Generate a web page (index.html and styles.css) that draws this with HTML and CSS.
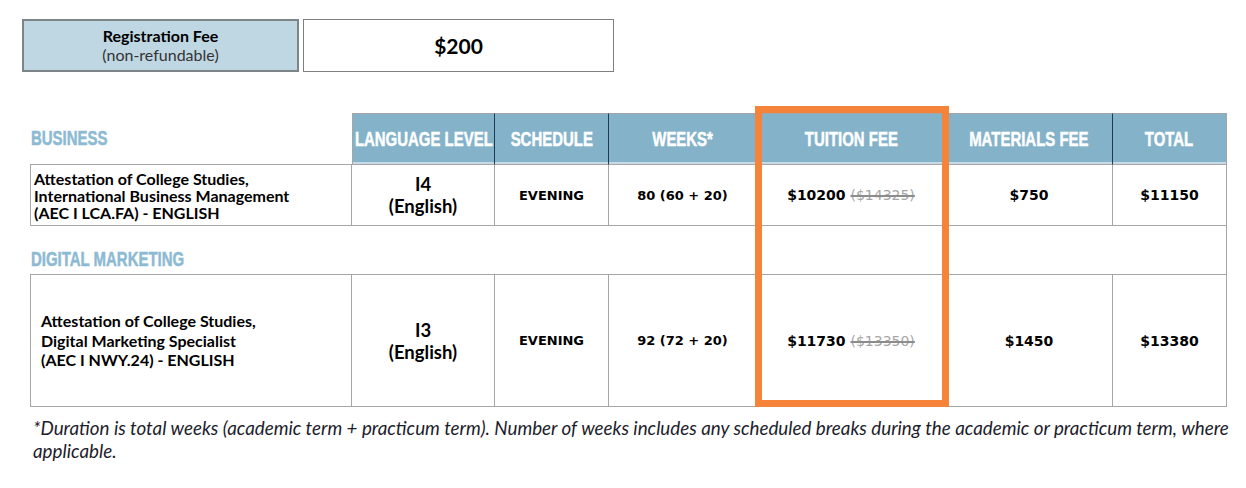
FILE: index.html
```html
<!DOCTYPE html>
<html lang="en">
<head>
<meta charset="utf-8">
<title>Fees</title>
<link rel="stylesheet" href="styles.css">
</head>
<body>
<div class="page">
  <div class="reg">
    <div class="reg-label"><strong>Registration Fee</strong><span>(non-refundable)</span></div>
    <div class="reg-value">$200</div>
  </div>
  <div class="table-wrap">
    <table class="fees">
      <colgroup>
        <col class="c1"><col class="c2"><col class="c3"><col class="c4"><col class="c5"><col class="c6"><col class="c7">
      </colgroup>
      <thead>
        <tr>
          <th class="cat"><span class="cx">BUSINESS</span></th>
          <th class="h h-first"><span class="hx">LANGUAGE LEVEL</span></th>
          <th class="h"><span class="hx">SCHEDULE</span></th>
          <th class="h"><span class="hx">WEEKS*</span></th>
          <th class="h"><span class="hx">TUITION FEE</span></th>
          <th class="h"><span class="hx">MATERIALS FEE</span></th>
          <th class="h h-last"><span class="hx">TOTAL</span></th>
        </tr>
      </thead>
      <tbody>
        <tr class="r1">
          <td class="prog prog-tight">Attestation of College Studies,<br>International Business Management<br>(AEC I LCA.FA) - ENGLISH</td>
          <td class="lvl">I4<br>(English)</td>
          <td class="val">EVENING</td>
          <td class="val">80 (60 + 20)</td>
          <td class="val price">$10200 <s>($14325)</s></td>
          <td class="val price">$750</td>
          <td class="val price">$11150</td>
        </tr>
        <tr class="r-cat">
          <td class="cat" colspan="7"><span class="cx">DIGITAL MARKETING</span></td>
        </tr>
        <tr class="r2">
          <td class="prog prog-loose">Attestation of College Studies,<br>Digital Marketing Specialist<br>(AEC I NWY.24) - ENGLISH</td>
          <td class="lvl">I3<br>(English)</td>
          <td class="val">EVENING</td>
          <td class="val">92 (72 + 20)</td>
          <td class="val price">$11730 <s>($13350)</s></td>
          <td class="val price">$1450</td>
          <td class="val price">$13380</td>
        </tr>
      </tbody>
    </table>
    <div class="highlight"></div>
  </div>
  <p class="note">*Duration is total weeks (academic term + practicum term). Number of weeks includes any scheduled breaks during the academic or practicum term, where applicable.</p>
</div>
</body>
</html>
```
FILE: styles.css
```css
* { box-sizing: border-box; }
html, body { margin: 0; padding: 0; background: #fff; }
body { font-family: Lato, "Open Sans", sans-serif; color: #000; }

.page { padding-top: 19px; width: 1246px; }

.reg { display: flex; gap: 4px; margin-left: 22px; }
.reg-label {
  width: 277px; height: 53px;
  background: #bfd7e3;
  border: 2px solid #7d8488;
  display: flex; flex-direction: column; align-items: center; justify-content: center;
  font-size: 16px; line-height: 19px;
  padding-bottom: 1px;
}
.reg-label strong { font-weight: 700; }
.reg-label span { font-weight: 400; color: #333; }
.reg-value {
  width: 311px; height: 53px;
  border: 1px solid #7f7f7f;
  display: flex; align-items: center; justify-content: center;
  font-size: 21px; font-weight: 700;
}

.table-wrap { position: relative; margin-left: 30px; margin-top: 41px; width: 1197px; }

.fees { border-collapse: separate; border-spacing: 0; table-layout: fixed; width: 1197px; }
.c1 { width: 322px; } .c2 { width: 143px; } .c3 { width: 114px; } .c4 { width: 148px; }
.c5 { width: 189px; } .c6 { width: 167px; } .c7 { width: 114px; }

.fees th, .fees td { padding: 0; vertical-align: middle; text-align: center; }

.hx, .cx {
  display: inline-block;
  white-space: nowrap;
  font-family: "Liberation Sans", Arial, sans-serif;
  font-weight: 700;
  font-size: 21px;
  line-height: 24px;
  transform: scaleX(0.712);
  -webkit-text-stroke: 0.5px currentColor;
}
.hx { margin: 0 -60px; transform-origin: 50% 50%; }
.cx { transform-origin: 0 50%; }

.fees thead th { height: 52px; }
.fees th.h {
  background: #83b2c9;
  color: #fff;
  border-top: 1px solid #a6a6a6;
  border-right: 1px solid #1c3a52;
  border-bottom: 1px solid #a6a6a6;
  box-shadow: inset 0 -2px 0 #c6dbe6;
}
.fees th.h-first { border-left: 1px solid #a6a6a6; }
.fees th.h-last { border-right: 1px solid #a6a6a6; }

.fees .cat {
  text-align: left;
  color: #8cbad3;
  padding-left: 1px;
  border-bottom: 1px solid #a6a6a6;
}
.fees thead th.cat { padding-bottom: 2px; }

.fees tbody td {
  border-right: 1px solid #a6a6a6;
  border-bottom: 1px solid #a6a6a6;
  font-weight: 700;
}
.fees tbody td.prog { border-left: 1px solid #a6a6a6; text-align: left; font-size: 16px; }
.fees td.prog-tight { padding-left: 3px; line-height: 17px; }
.fees td.prog-loose { padding-left: 10px; line-height: 19.5px; }

.r1 td { height: 61px; }
.fees .r-cat td { height: 49px; vertical-align: bottom; padding-bottom: 3px; }
.fees tbody .r-cat td.cat { border-right: 1px solid #a6a6a6; }
.r2 td { height: 132px; }

.fees td.lvl { font-size: 18.5px; line-height: 22px; }
.fees td.val {
  font-family: "DejaVu Sans", Verdana, sans-serif;
  font-size: 13px;
}
.fees td.price { font-size: 14px; }
.fees td.val s {
  font-weight: 400;
  color: #a6a6a6;
  text-decoration-color: #8c8c8c;
  text-decoration-thickness: 2px;
}

.highlight {
  position: absolute;
  left: 725px; top: -7px;
  width: 194px; height: 301px;
  border: 7px solid #f5843a;
  pointer-events: none;
}

.note {
  margin: 9px 0 0 33px;
  width: 1200px;
  font-style: italic;
  font-size: 18.8px;
  line-height: 23px;
  color: #1d1d2b;
}
```
